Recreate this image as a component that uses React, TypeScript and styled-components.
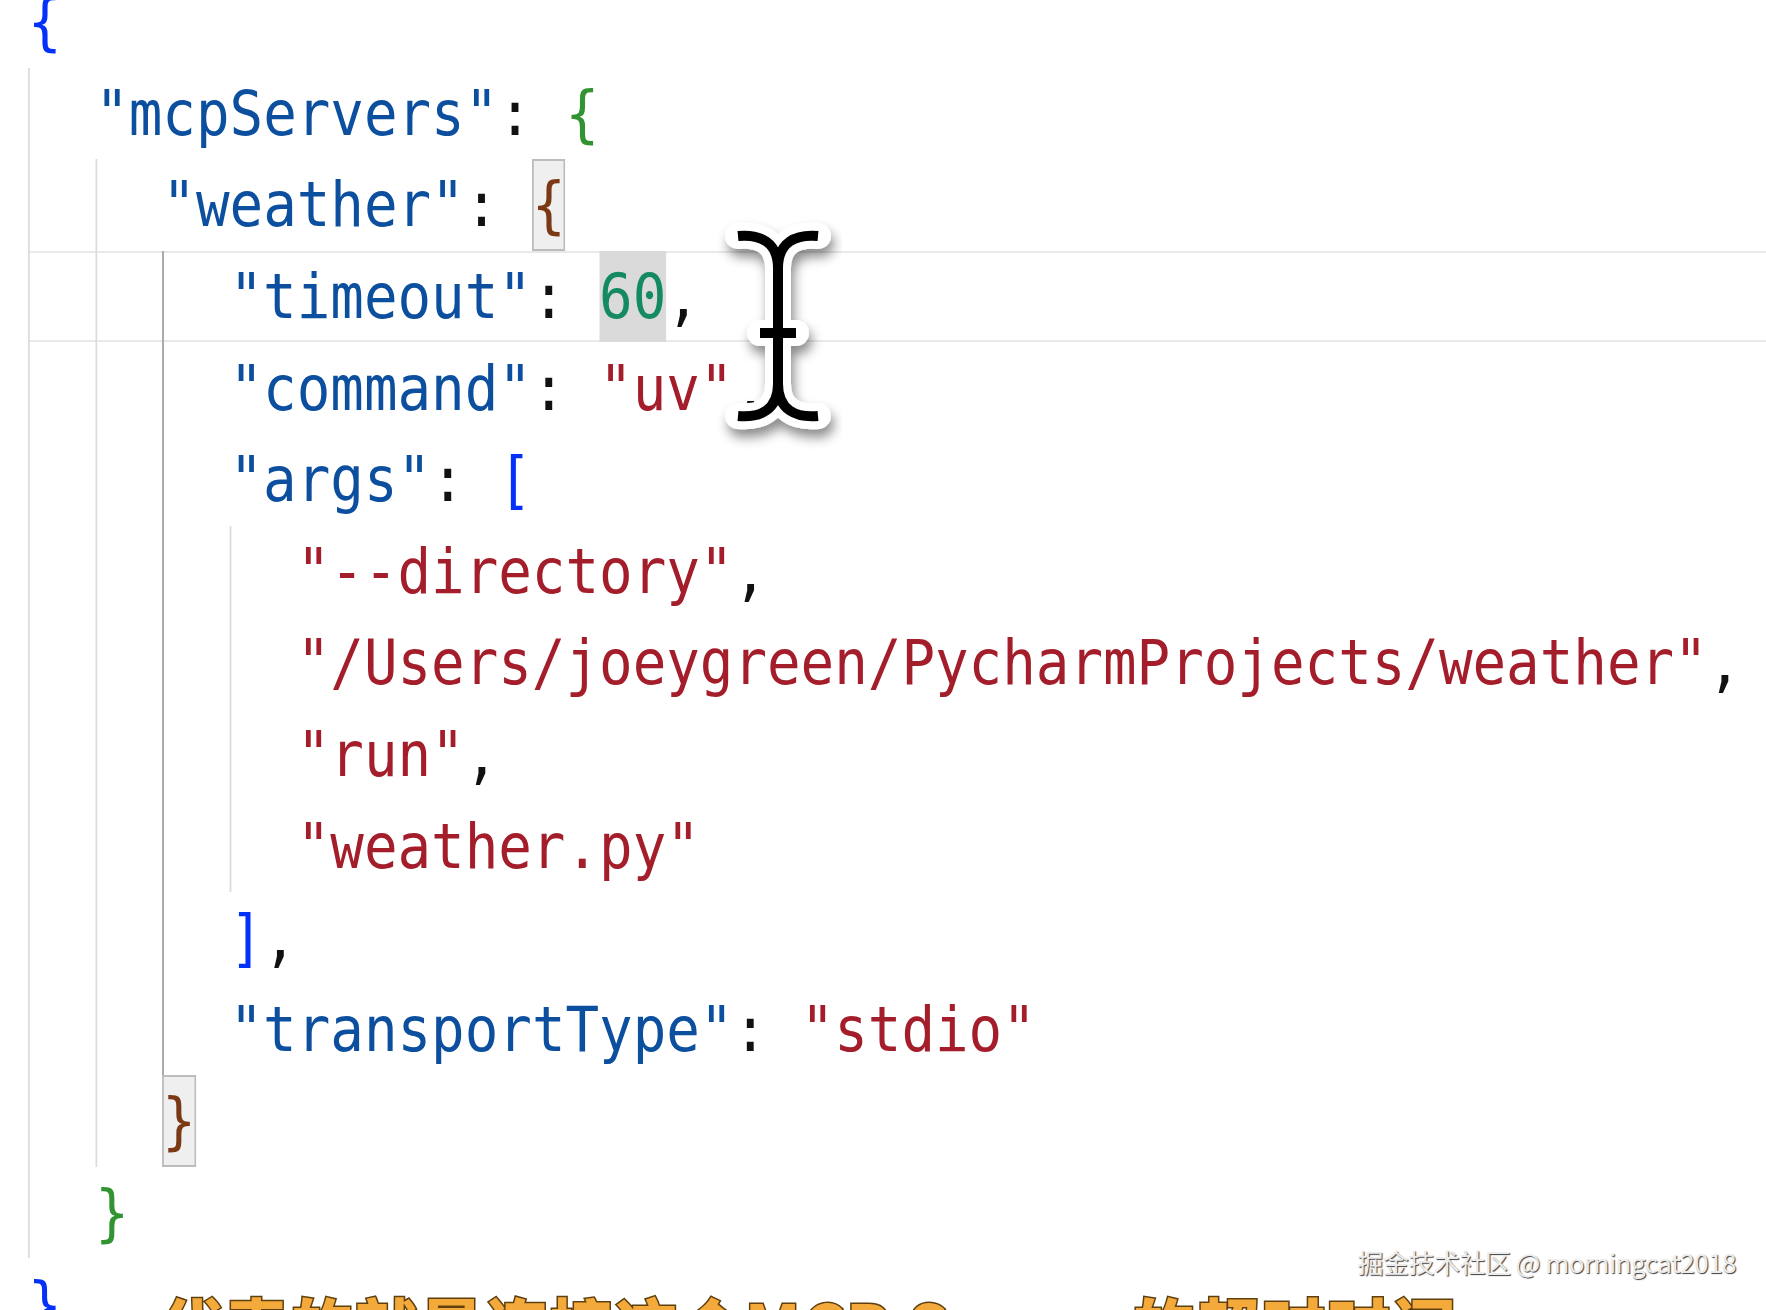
import React from "react";
import styled, { createGlobalStyle } from "styled-components";

const GlobalStyle = createGlobalStyle`
  html, body {
    margin: 0;
    padding: 0;
    background: #ffffff;
  }
  #root {
    width: 100vw;
    height: 100vh;
  }
`;

const LINE_H = 91.6;

const Screen = styled.div`
  position: relative;
  width: 100vw;
  height: 100vh;
  overflow: hidden;
  background: #ffffff;
`;

const Editor = styled.div`
  padding-left: 28px;
  margin-top: -24px;
`;

const CodeView = styled.div`
  width: 112%;
  transform: scaleX(0.9);
  transform-origin: 0 0;
  font-family: "DejaVu Sans Mono", "Liberation Mono", monospace;
  font-size: 62px;
  color: #000000;
`;

const Line = styled.div<{ $current?: boolean }>`
  display: flex;
  align-items: stretch;
  height: ${LINE_H}px;
  box-shadow: ${(p) =>
    p.$current ? "inset 0 2px 0 #e9e9e9, inset 0 -2px 0 #e9e9e9" : "none"};
`;

const IndentCell = styled.span<{ $guide: "none" | "normal" | "active" }>`
  flex: none;
  width: 2ch;
  box-sizing: border-box;
  border-left: 2px solid
    ${(p) =>
      p.$guide === "active"
        ? "#a2a2a2"
        : p.$guide === "normal"
        ? "#dcdcdc"
        : "transparent"};
`;

const Token = styled.span<{ $color: string; $box?: "bracket" | "word" }>`
  flex: none;
  display: flex;
  align-items: center;
  white-space: pre;
  color: ${(p) => p.$color};
  background: ${(p) =>
    p.$box === "bracket" ? "#efefef" : p.$box === "word" ? "#dadada" : "transparent"};
  box-shadow: ${(p) => (p.$box === "bracket" ? "inset 0 0 0 2px #bcbcbc" : "none")};
`;

const Cursor = styled.svg`
  position: absolute;
  left: 716px;
  top: 216px;
  width: 124px;
  height: 234px;
  overflow: visible;
`;

const Watermark = styled.div`
  position: absolute;
  right: 30px;
  top: 1243px;
  font-family: "Noto Sans CJK SC", "Noto Sans", sans-serif;
  font-size: 26px;
  letter-spacing: -0.5px;
  color: #ececec;
  text-shadow: 1px 1px 1px #3d3d3d, -1px -1px 0 #ffffff;
  white-space: nowrap;
`;

const Caption = styled.div`
  position: absolute;
  left: 160px;
  top: 1292px;
  font-family: "Noto Sans CJK SC", "Noto Sans", sans-serif;
  font-weight: 900;
  font-size: 63px;
  line-height: 1;
  letter-spacing: 2px;
  color: #f4a93b;
  -webkit-text-stroke: 3px #5e3f0e;
  paint-order: stroke fill;
  white-space: nowrap;
`;

const C = {
  key: "#0b4f9e",
  str: "#a31d2a",
  num: "#138a62",
  punct: "#111111",
  b1: "#0431fa",
  b2: "#319331",
  b3: "#7b3814",
};

type Tok = { t: string; c: string; box?: "bracket" | "word" };
type LineDef = { guides: ("normal" | "active")[]; toks: Tok[]; current?: boolean };

const n = "normal" as const;
const a = "active" as const;

const lines: LineDef[] = [
  { guides: [], toks: [{ t: "{", c: C.b1 }] },
  {
    guides: [n],
    toks: [
      { t: '"mcpServers"', c: C.key },
      { t: ": ", c: C.punct },
      { t: "{", c: C.b2 },
    ],
  },
  {
    guides: [n, n],
    toks: [
      { t: '"weather"', c: C.key },
      { t: ": ", c: C.punct },
      { t: "{", c: C.b3, box: "bracket" },
    ],
  },
  {
    guides: [n, n, a],
    current: true,
    toks: [
      { t: '"timeout"', c: C.key },
      { t: ": ", c: C.punct },
      { t: "60", c: C.num, box: "word" },
      { t: ",", c: C.punct },
    ],
  },
  {
    guides: [n, n, a],
    toks: [
      { t: '"command"', c: C.key },
      { t: ": ", c: C.punct },
      { t: '"uv"', c: C.str },
      { t: ",", c: C.punct },
    ],
  },
  {
    guides: [n, n, a],
    toks: [
      { t: '"args"', c: C.key },
      { t: ": ", c: C.punct },
      { t: "[", c: C.b1 },
    ],
  },
  {
    guides: [n, n, a, n],
    toks: [
      { t: '"--directory"', c: C.str },
      { t: ",", c: C.punct },
    ],
  },
  {
    guides: [n, n, a, n],
    toks: [
      { t: '"/Users/joeygreen/PycharmProjects/weather"', c: C.str },
      { t: ",", c: C.punct },
    ],
  },
  {
    guides: [n, n, a, n],
    toks: [
      { t: '"run"', c: C.str },
      { t: ",", c: C.punct },
    ],
  },
  {
    guides: [n, n, a, n],
    toks: [{ t: '"weather.py"', c: C.str }],
  },
  {
    guides: [n, n, a],
    toks: [
      { t: "]", c: C.b1 },
      { t: ",", c: C.punct },
    ],
  },
  {
    guides: [n, n, a],
    toks: [
      { t: '"transportType"', c: C.key },
      { t: ": ", c: C.punct },
      { t: '"stdio"', c: C.str },
    ],
  },
  {
    guides: [n, n],
    toks: [{ t: "}", c: C.b3, box: "bracket" }],
  },
  {
    guides: [n],
    toks: [{ t: "}", c: C.b2 }],
  },
  { guides: [], toks: [{ t: "}", c: C.b1 }] },
];

function IBeam() {
  return (
    <Cursor viewBox="0 0 124 234" aria-hidden="true">
      <defs>
        <filter id="cursorShadow" x="-30%" y="-20%" width="160%" height="150%">
          <feDropShadow dx="3" dy="8" stdDeviation="6" floodColor="#000" floodOpacity="0.45" />
        </filter>
      </defs>
      <g filter="url(#cursorShadow)" fill="none" strokeLinecap="round" strokeLinejoin="round">
        <g stroke="#ffffff" strokeWidth="26">
          <path d="M22 20 C44 18 62 26 62 52 C62 26 80 18 102 20" />
          <path d="M22 200 C44 202 62 194 62 168 C62 194 80 202 102 200" />
          <path d="M62 52 V168" />
          <path d="M44 117 H80" />
        </g>
      </g>
      <g fill="none" stroke="#000000" strokeWidth="10" strokeLinecap="butt" strokeLinejoin="round">
        <path d="M22 20 C44 18 62 26 62 52 C62 26 80 18 102 20" />
        <path d="M22 200 C44 202 62 194 62 168 C62 194 80 202 102 200" />
        <path d="M62 50 V170" />
        <path d="M44 117 H80" />
      </g>
    </Cursor>
  );
}

export default function App() {
  return (
    <Screen>
      <GlobalStyle />
      <Editor>
        <CodeView>
          {lines.map((ln, i) => (
            <Line key={i} $current={ln.current}>
              {ln.guides.map((g, j) => (
                <IndentCell key={j} $guide={g} />
              ))}
              {ln.toks.map((tk, k) => (
                <Token key={k} $color={tk.c} $box={tk.box}>
                  {tk.t}
                </Token>
              ))}
            </Line>
          ))}
        </CodeView>
      </Editor>
      <IBeam />
      <Watermark>掘金技术社区 @ morningcat2018</Watermark>
      <Caption>代表的就是连接这个MCP Server的超时时间</Caption>
    </Screen>
  );
}
